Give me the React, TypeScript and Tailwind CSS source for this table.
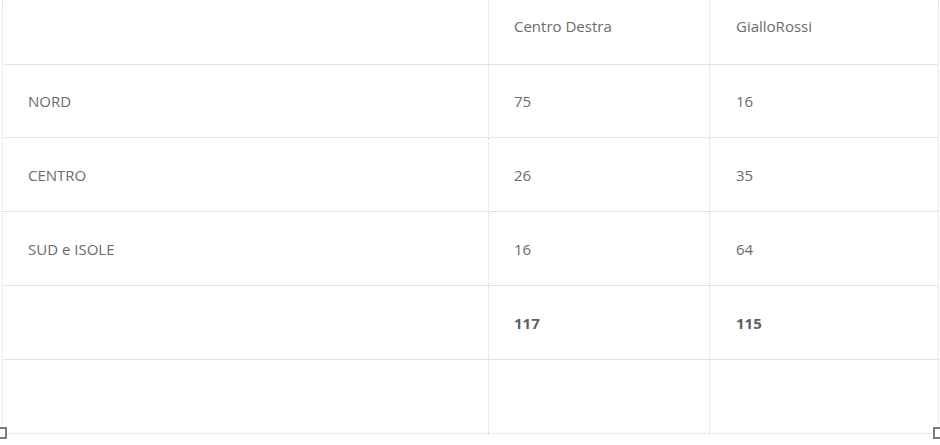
const ROWS = [
  { label: "NORD", a: "75", b: "16" },
  { label: "CENTRO", a: "26", b: "35" },
  { label: "SUD e ISOLE", a: "16", b: "64" },
];

const font = { fontFamily: '"Open Sans", "Liberation Sans", sans-serif' };

function Cell({
  children,
  first,
  last,
  bold,
  header,
  third,
  h,
}: {
  children?: React.ReactNode;
  first?: boolean;
  last?: boolean;
  bold?: boolean;
  header?: boolean;
  third?: boolean;
  h: string;
}) {
  return (
    <div
      className={`flex text-[15px] leading-5 border-solid ${h} ${third ? "pl-[26px]" : "pl-[25px]"} ${
        header ? "items-start pt-[16px]" : "items-center"
      } ${first ? "" : "border-l [border-left-style:dotted] border-l-[#d6d6d6]"} ${
        last ? "" : "border-b border-b-[#e3e3e3]"
      } ${bold ? "font-bold text-[#5f5f5f]" : "text-[#6b6b6b]"}`}
    >
      {children}
    </div>
  );
}

export default function App() {
  return (
    <div className="relative w-[940px] h-[445px] bg-white overflow-hidden" style={font}>
      <div className="ml-[2px] w-[937px] h-[434px] border-l border-r border-b border-dotted border-[#d6d6d6]">
        <div className="grid grid-cols-[485px_221px_229px]">
          <Cell first header h="h-[65px]" />
          <Cell header h="h-[65px]">Centro Destra</Cell>
          <Cell header third h="h-[65px]">GialloRossi</Cell>

          {ROWS.map((r, i) => (
            <div key={r.label} className="contents">
              <Cell first h={i === 0 ? "h-[73px]" : "h-[74px]"}>{r.label}</Cell>
              <Cell h={i === 0 ? "h-[73px]" : "h-[74px]"}>{r.a}</Cell>
              <Cell third h={i === 0 ? "h-[73px]" : "h-[74px]"}>{r.b}</Cell>
            </div>
          ))}

          <Cell first h="h-[74px]" />
          <Cell bold h="h-[74px]">117</Cell>
          <Cell bold third h="h-[74px]">115</Cell>

          <Cell first last h="h-[73px]" />
          <Cell last h="h-[73px]" />
          <Cell last third h="h-[73px]" />
        </div>
      </div>

      {/* resize handles */}
      <div className="absolute left-[-6px] top-[427px] w-[13px] h-[12px] border-2 border-[#7a7a7a] bg-white" />
      <div className="absolute left-[933px] top-[427px] w-[13px] h-[12px] border-2 border-[#7a7a7a] bg-white" />
    </div>
  );
}
